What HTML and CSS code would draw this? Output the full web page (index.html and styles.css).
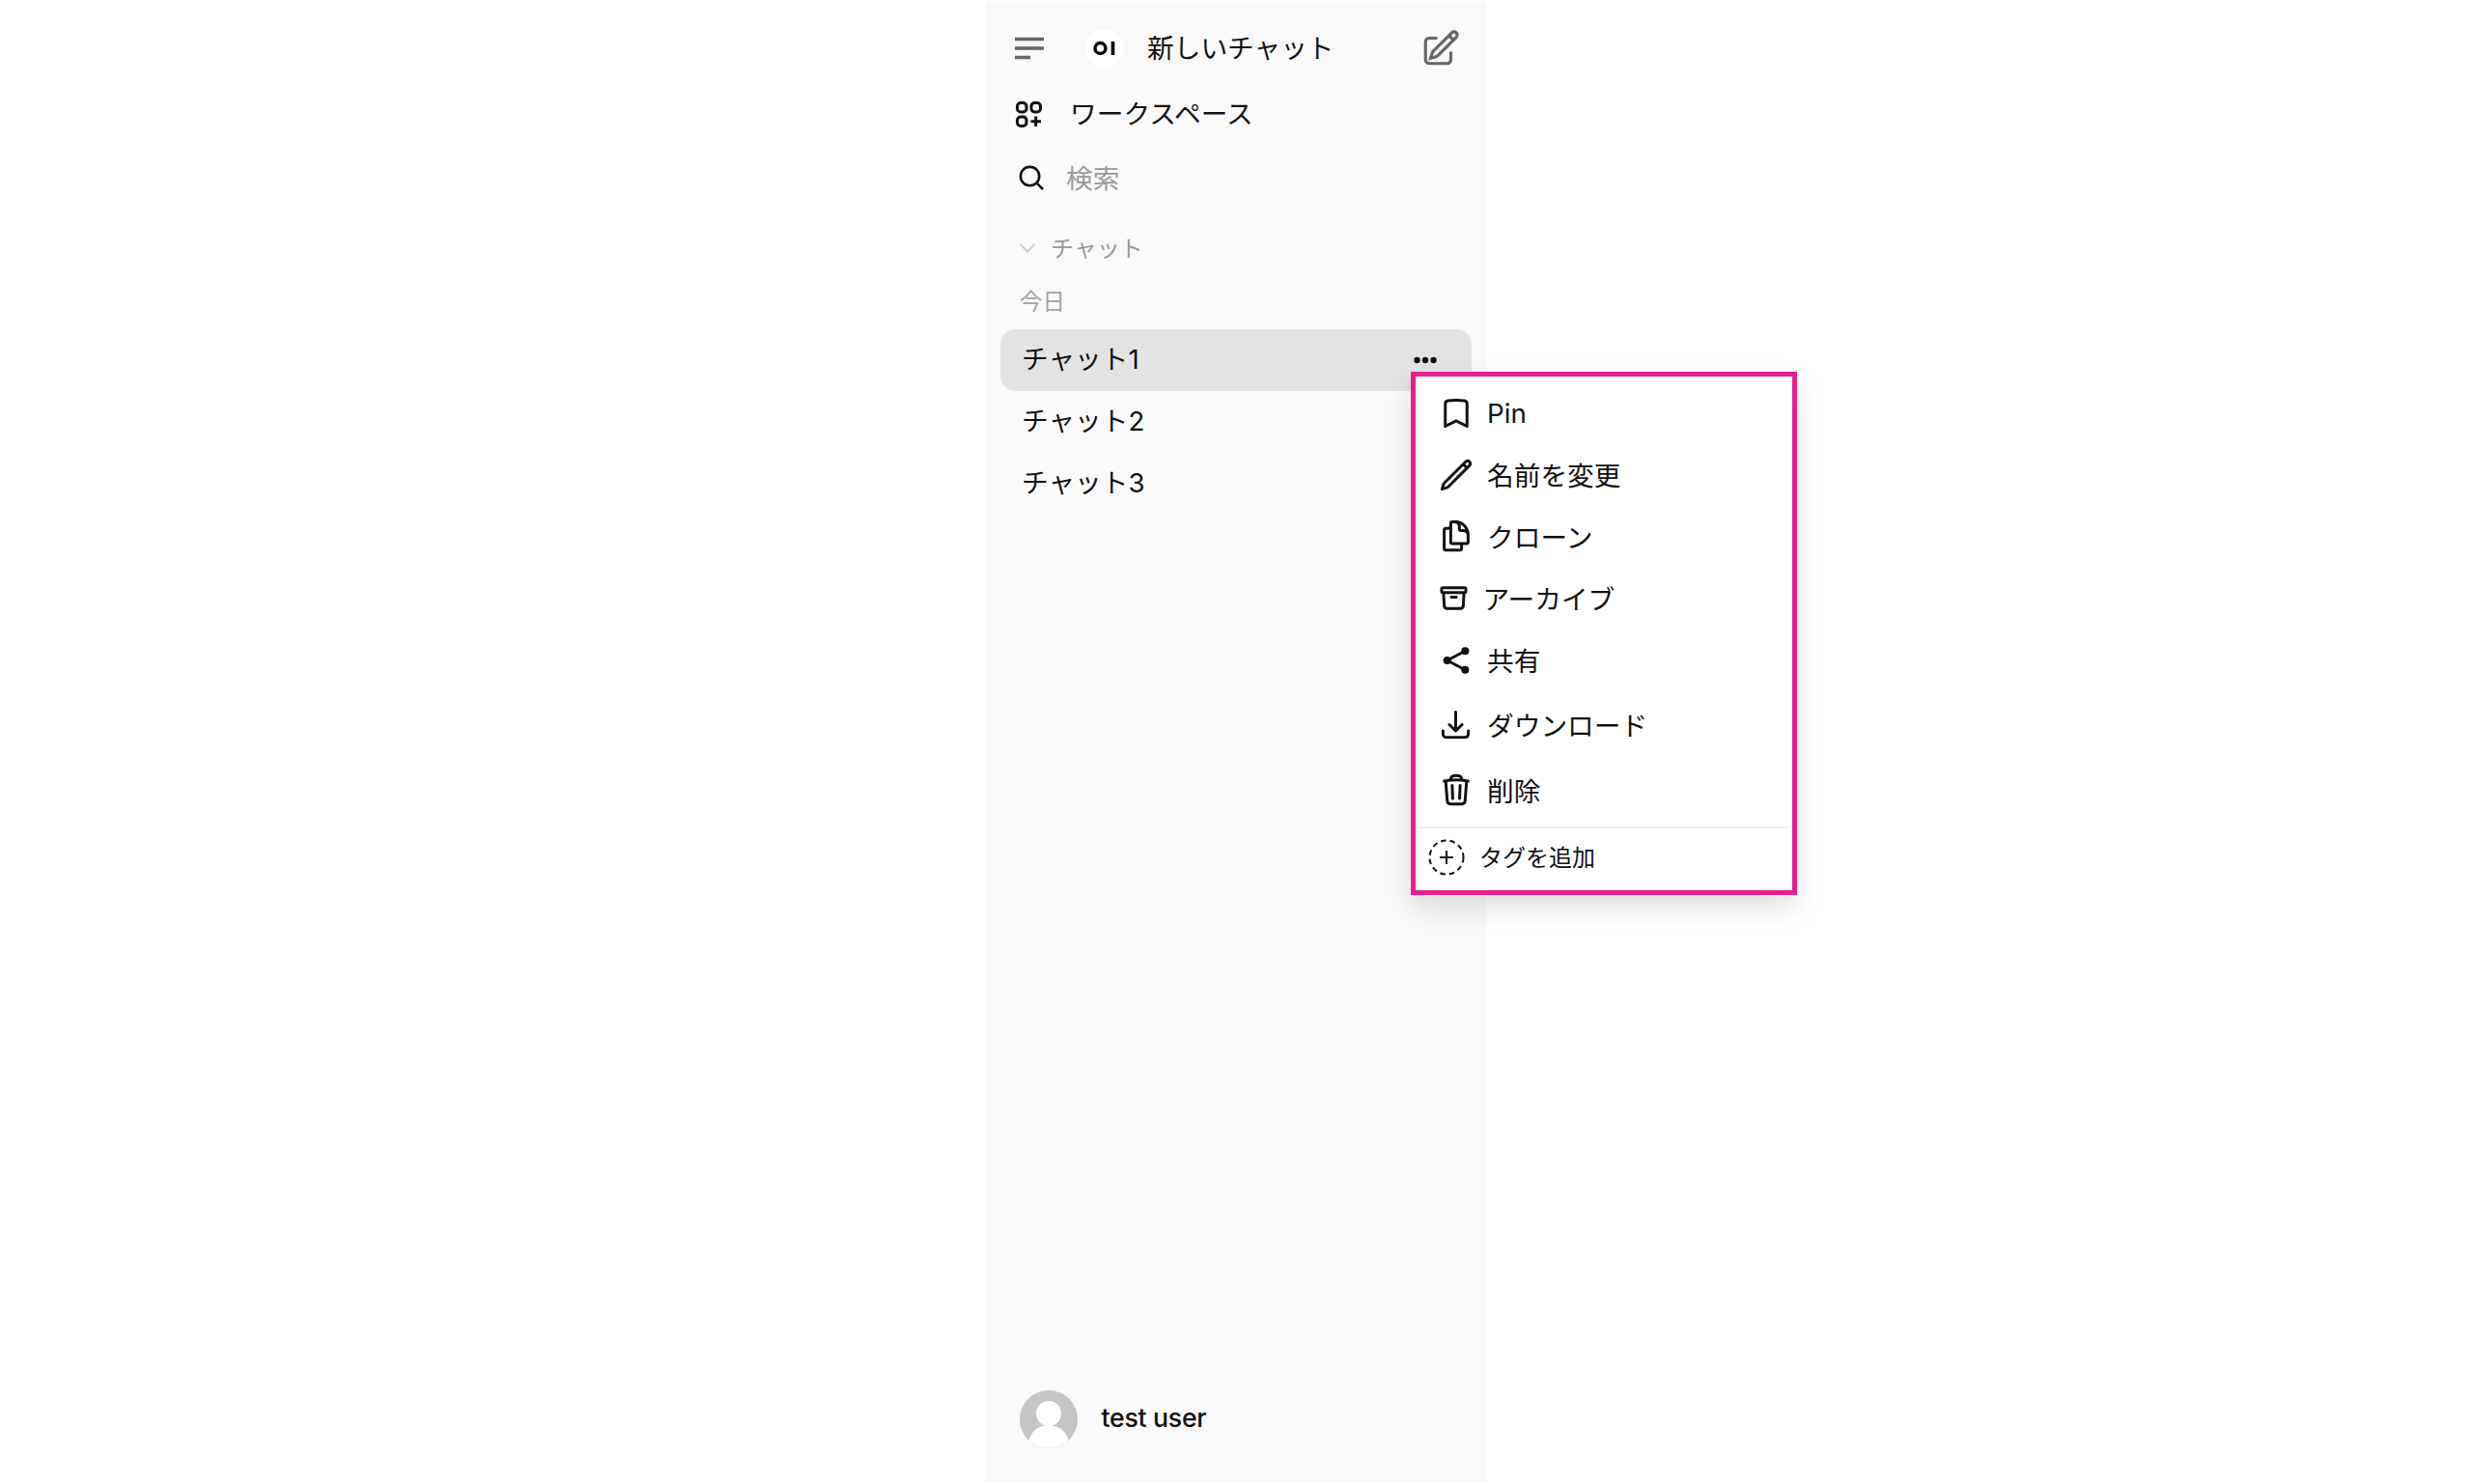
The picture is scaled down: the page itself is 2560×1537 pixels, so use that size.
FILE: index.html
```html
<!DOCTYPE html>
<html lang="ja">
<head>
<meta charset="utf-8">
<title>チャット</title>
<link rel="stylesheet" href="styles.css">
</head>
<body>
<div class="page">
  <aside class="sidebar">
    <div class="top-row">
      <svg class="ic-menu" viewBox="0 0 30 24"><path d="M0 2.5h30M0 12h30M0 21.5h16"/></svg>
      <svg class="ic-logo" viewBox="0 0 40 40"><circle cx="20" cy="20" r="20" fill="#fff"/><circle cx="15.500" cy="20" r="5.500" fill="none" stroke="#000" stroke-width="3.400"/><rect x="26.700" y="13" width="3.600" height="14" fill="#000"/></svg>
      <span class="new-chat">新しいチャット</span>
      <svg class="ic-edit" viewBox="0 0 24 24"><path d="m16.862 4.487 1.687-1.688a1.875 1.875 0 1 1 2.652 2.652L10.582 16.070a4.500 4.500 0 0 1-1.897 1.130L6 18l.8-2.685a4.500 4.500 0 0 1 1.130-1.897l8.932-8.931Zm0 0L19.500 7.125M18 14v4.750A2.250 2.250 0 0 1 15.750 21H5.250A2.250 2.250 0 0 1 3 18.750V8.250A2.250 2.250 0 0 1 5.250 6H10"/></svg>
    </div>
    <div class="workspace-row">
      <svg class="ic-workspace" viewBox="0 0 27 27"><rect x="1.500" y="1.500" width="9.500" height="9.500" rx="3.500"/><rect x="16" y="1.500" width="9.500" height="9.500" rx="3.500"/><rect x="1.500" y="16" width="9.500" height="9.500" rx="3.500"/><path d="M20.700 15.500v10.500M15.500 20.700H26"/></svg>
      <span>ワークスペース</span>
    </div>
    <div class="search-row">
      <svg class="ic-search" viewBox="0 0 24 24"><path d="m21 21-5.197-5.197m0 0A7.500 7.500 0 1 0 5.196 5.196a7.500 7.500 0 0 0 10.607 10.607Z"/></svg>
      <span>検索</span>
    </div>
    <div class="section-row">
      <svg class="ic-chevron" viewBox="0 0 18 10"><path d="m1.500 1 7.500 7.500L16.500 1"/></svg>
      <span>チャット</span>
    </div>
    <div class="date-row">今日</div>
    <div class="chat-row is-active"><span>チャット1</span>
      <svg class="ic-dots" viewBox="0 0 24 8"><circle cx="3.500" cy="4" r="3.200"/><circle cx="12" cy="4" r="3.200"/><circle cx="20.500" cy="4" r="3.200"/></svg>
    </div>
    <div class="chat-row"><span>チャット2</span></div>
    <div class="chat-row"><span>チャット3</span></div>
    <div class="user-row">
      <svg class="avatar" viewBox="0 0 60 60"><defs><clipPath id="av"><circle cx="30" cy="30" r="30"/></clipPath></defs><circle cx="30" cy="30" r="30" fill="#c4c4c4"/><g fill="#fff"><circle cx="30" cy="24" r="13"/><ellipse cx="30" cy="56" rx="21" ry="20" clip-path="url(#av)"/></g></svg>
      <span>test user</span>
    </div>
  </aside>
  <div class="menu">
    <div class="menu-item h64"><svg class="ic" viewBox="0 0 24 24"><path d="M17.593 3.322c1.100.128 1.907 1.077 1.907 2.185V21L12 17.250 4.500 21V5.507c0-1.108.806-2.057 1.907-2.185a48.507 48.507 0 0 1 11.186 0Z"/></svg><span>Pin</span></div>
    <div class="menu-item h63"><svg class="ic" viewBox="0 0 24 24"><path d="m16.862 4.487 1.687-1.688a1.875 1.875 0 1 1 2.652 2.652L6.832 19.820a4.500 4.500 0 0 1-1.897 1.130l-2.685.8.8-2.685a4.500 4.500 0 0 1 1.130-1.897L16.863 4.487Zm0 0L19.500 7.125"/></svg><span>名前を変更</span></div>
    <div class="menu-item h64"><svg class="ic" viewBox="0 0 24 24"><path d="M15.750 17.250v3.375c0 .621-.504 1.125-1.125 1.125h-9.750a1.125 1.125 0 0 1-1.125-1.125V7.875c0-.621.504-1.125 1.125-1.125H6.750a9.060 9.060 0 0 1 1.500.124m7.500 10.376h3.375c.621 0 1.125-.504 1.125-1.125V11.250c0-4.460-3.243-8.161-7.500-8.876a9.060 9.060 0 0 0-1.500-.124H9.375c-.621 0-1.125.504-1.125 1.125v3.500m7.500 10.375H9.375a1.125 1.125 0 0 1-1.125-1.125v-9.250m12 6.625v-1.875a3.375 3.375 0 0 0-3.375-3.375h-1.500a1.125 1.125 0 0 1-1.125-1.125v-1.500a3.375 3.375 0 0 0-3.375-3.375H9.750"/></svg><span>クローン</span></div>
    <div class="menu-item h64 archive"><svg class="ic ic-archive" viewBox="0 0 24 24"><path d="m20.250 7.500-.625 10.632a2.250 2.250 0 0 1-2.247 2.118H6.622a2.250 2.250 0 0 1-2.247-2.118L3.750 7.500M10 11.250h4M3.375 7.500h17.250c.621 0 1.125-.504 1.125-1.125v-1.500c0-.621-.504-1.125-1.125-1.125H3.375c-.621 0-1.125.504-1.125 1.125v1.500c0 .621.504 1.125 1.125 1.125Z"/></svg><span>アーカイブ</span></div>
    <div class="menu-item h65"><svg class="ic" viewBox="0 0 24 24"><path d="M18.200 5.500 5.800 12l12.400 6.500"/><circle class="fill" cx="18.200" cy="5.500" r="2.700"/><circle class="fill" cx="18.200" cy="18.500" r="2.700"/><circle class="fill" cx="5.800" cy="12" r="2.700"/></svg><span>共有</span></div>
    <div class="menu-item h68"><svg class="ic ic-download" viewBox="0 0 24 24"><path d="M3 16.500v2.250A2.250 2.250 0 0 0 5.250 21h13.500A2.250 2.250 0 0 0 21 18.750V16.500M16.500 12 12 16.500m0 0L7.500 12m4.500 4.500V3"/></svg><span>ダウンロード</span></div>
    <div class="menu-item h68"><svg class="ic" viewBox="0 0 24 24"><path d="m14.740 9-.346 9m-4.788 0L9.260 9m9.968-3.210c.342.052.682.107 1.022.166m-1.022-.165L18.160 19.673a2.250 2.250 0 0 1-2.244 2.077H8.084a2.250 2.250 0 0 1-2.244-2.077L4.772 5.790m14.456 0a48.108 48.108 0 0 0-3.478-.397m-12 .562c.34-.059.68-.114 1.022-.165m0 0a48.110 48.110 0 0 1 3.478-.397m7.500 0v-.916c0-1.180-.91-2.164-2.090-2.201a51.964 51.964 0 0 0-3.320 0c-1.180.037-2.090 1.022-2.090 2.201v.916m7.500 0a48.667 48.667 0 0 0-7.500 0"/></svg><span>削除</span></div>
    <div class="menu-tag">
      <svg class="ic-tag" viewBox="0 0 38 38"><circle cx="19" cy="19" r="17.500" class="dash"/><path d="M19 12v14M12 19h14"/></svg>
      <span>タグを追加</span>
    </div>
  </div>
</div>
</body>
</html>
```
FILE: styles.css
```css
* { box-sizing: border-box; }
html, body { margin: 0; padding: 0; background: #fff; }
body {
  font-family: Inter, "Noto Sans CJK JP", sans-serif;
  color: #111;
  font-size: 27.700px;
}
.page { position: relative; width: 2560px; height: 1537px; padding: 1px 0 2px 1020px; }
.sidebar {
  width: 520px;
  height: 1534px;
  background: #f9f9f9;
  display: flex;
  flex-direction: column;
  padding: 13px 16px 0;
}
svg { display: block; flex: none; fill: none; stroke: currentColor; }

.top-row { display: flex; align-items: center; height: 72px; padding-left: 15px; }
.ic-menu { width: 30px; height: 24px; stroke: #666; stroke-width: 3.400; }
.ic-logo { width: 40px; height: 40px; margin-left: 43px; stroke: none; }
.new-chat { margin-left: 24px; margin-bottom: 5px; }
.ic-edit { width: 42px; height: 42px; margin-left: auto; margin-right: 11px; stroke: #666; stroke-width: 1.800; }

.workspace-row { display: flex; align-items: center; height: 64px; padding-left: 16px; }
.ic-workspace { width: 27px; height: 27px; stroke-width: 3; }
.workspace-row span { margin-left: 29px; margin-bottom: 4px; }

.search-row { display: flex; align-items: center; height: 68px; padding-left: 17px; color: #999; }
.ic-search { width: 31px; height: 31px; stroke: #111; stroke-width: 2; }
.search-row span { margin-left: 20px; margin-bottom: 3px; }

.section-row { display: flex; align-items: center; height: 44px; margin-top: 17px; padding-left: 19px; color: #999; font-size: 24px; }
.ic-chevron { width: 18px; height: 10px; stroke: #ccc; stroke-width: 2; }
.section-row span { margin-left: 15px; margin-bottom: 4px; }

.date-row { height: 40px; margin-top: 14px; line-height: 40px; padding-left: 20px; color: #a3a3a3; font-size: 23.500px; }

.chat-row { display: flex; align-items: center; justify-content: space-between; flex: none; height: 64px; padding: 0 36px 0 22px; border-radius: 16px; }
.chat-row span { margin-bottom: 7px; }
.date-row + .chat-row { margin-top: 8px; }
.is-active { background: #e3e3e3; }
.ic-dots { width: 24px; height: 8px; fill: #111; stroke: none; }

.user-row { display: flex; align-items: center; margin-top: auto; margin-bottom: 35px; padding-left: 20px; font-weight: 500; font-size: 26.700px; letter-spacing: -.3px; }
.avatar { width: 60px; height: 60px; stroke: none; }
.user-row span { margin-left: 24.500px; margin-bottom: 4px; }

.menu {
  position: absolute;
  left: 1461px;
  top: 385px;
  width: 400px;
  height: 542px;
  background: #fff;
  border: 5px solid #e91e8c;
  box-shadow: 0 14px 30px rgba(0, 0, 0, .12);
  padding-top: 6px;
}
.menu-item { display: flex; align-items: center; padding-left: 24px; }
.h63 { height: 63px; }
.h64 { height: 64px; }
.h65 { height: 65px; }
.h68 { height: 68px; }
.ic { width: 36px; height: 36px; stroke-width: 2; stroke-linecap: round; stroke-linejoin: round; }
.ic .fill { fill: currentColor; stroke: none; }
.menu-item span { margin-left: 14px; margin-bottom: 1px; }
.archive span { margin-left: 14.500px; }
.ic-archive { width: 31px; height: 31px; stroke-width: 2.300; }
.ic-download { width: 35px; height: 35px; margin: 0 1px 0 0; }
.menu-tag {
  display: flex;
  align-items: center;
  height: 62px;
  margin: 4px 4px 0 2px;
  border-top: 2px solid #eee;
  padding-left: 11px;
  font-size: 24px;
}
.ic-tag { width: 38px; height: 38px; stroke-width: 2; }
.ic-tag .dash { stroke-dasharray: 5.500 4; }
.menu-tag span { margin-left: 15px; margin-bottom: 4px; }
```
